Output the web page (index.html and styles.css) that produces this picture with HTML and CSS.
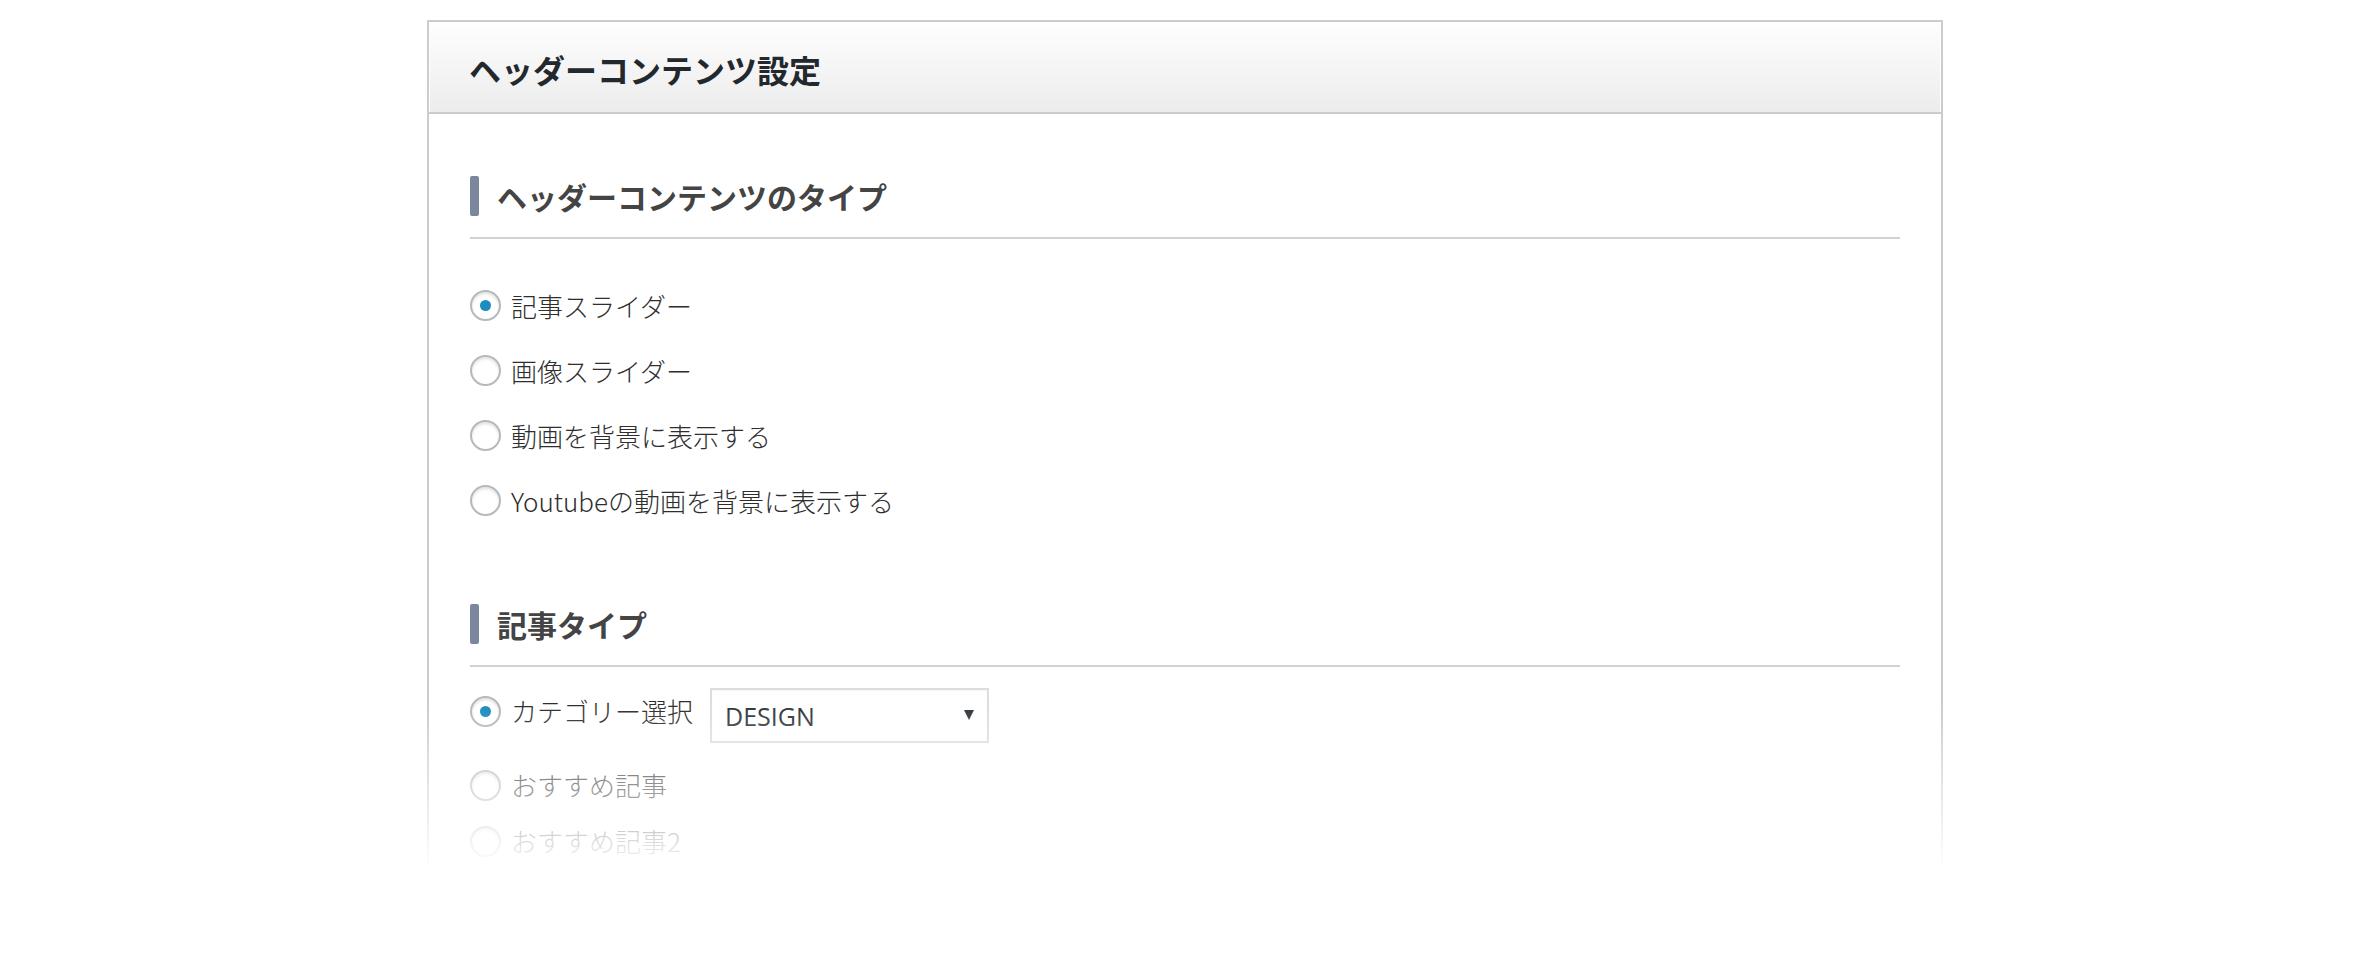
FILE: index.html
```html
<!DOCTYPE html>
<html lang="ja">
<head>
<meta charset="utf-8">
<title>ヘッダーコンテンツ設定</title>
<link rel="stylesheet" href="styles.css">
</head>
<body>
<div class="stage">
  <div class="panel">
    <div class="panel-head">
      <h1 class="panel-title">ヘッダーコンテンツ設定</h1>
    </div>
    <div class="panel-body">
      <h2 class="section-title section-first">ヘッダーコンテンツのタイプ</h2>
      <div class="list list-wide">
        <label class="opt"><span class="radio checked"></span><span class="opt-text">記事スライダー</span></label>
        <label class="opt"><span class="radio"></span><span class="opt-text">画像スライダー</span></label>
        <label class="opt"><span class="radio"></span><span class="opt-text">動画を背景に表示する</span></label>
        <label class="opt"><span class="radio"></span><span class="opt-text">Youtubeの動画を背景に表示する</span></label>
      </div>
      <h2 class="section-title section-next">記事タイプ</h2>
      <div class="list list-tight">
        <div class="opt-row">
          <label class="opt opt-select"><span class="radio checked"></span><span class="opt-text">カテゴリー選択</span></label>
          <div class="select"><span class="select-value">DESIGN</span><span class="select-arrow"></span></div>
        </div>
        <label class="opt opt-small opt-gap"><span class="radio"></span><span class="opt-text">おすすめ記事</span></label>
        <label class="opt opt-small"><span class="radio"></span><span class="opt-text">おすすめ記事2</span></label>
      </div>
    </div>
  </div>
  <div class="fade"></div>
</div>
</body>
</html>
```
FILE: styles.css
```css
html, body {
  margin: 0;
  padding: 0;
  background: #ffffff;
}

body {
  font-family: "Noto Sans CJK JP", "Noto Sans", sans-serif;
  color: #333;
}

.stage {
  position: relative;
  width: 1516px;
  height: 850px;
  margin: 20px auto 0;
  overflow: hidden;
}

.panel {
  box-sizing: border-box;
  width: 1516px;
  border: 2px solid #cccccc;
  background: #fff;
  min-height: 1000px;
}

.panel-head {
  box-sizing: border-box;
  height: 92px;
  border-bottom: 2px solid #cccccc;
  background: linear-gradient(#fefefe, #ececec);
  box-shadow: inset 1px 1px 0 #ffffff, inset -1px 0 0 #ffffff;
  display: flex;
  align-items: center;
  padding: 4px 0 0 40px;
}

.panel-title {
  margin: 0;
  font-size: 32px;
  font-weight: 700;
  color: #23282d;
  line-height: 1;
}

.panel-body {
  padding: 0 41px;
}

.section-title {
  display: flex;
  align-items: center;
  gap: 18px;
  height: 40px;
  margin: 0;
  padding-bottom: 21px;
  border-bottom: 2px solid #d2d2d2;
  font-size: 30px;
  font-weight: 700;
  color: #444;
  line-height: 1;
}

.section-title::before {
  content: "";
  display: block;
  width: 9px;
  height: 40px;
  border-radius: 2px;
  background: #7b879c;
}

.section-first {
  margin-top: 62px;
}

.section-next {
  margin-top: 71px;
}

.list-wide {
  margin-top: 34px;
}

.list-tight {
  margin-top: 21px;
}

.opt {
  display: flex;
  align-items: center;
  gap: 10px;
  height: 65px;
}

.opt-small {
  height: 56px;
}

.opt-gap {
  margin-top: 14px;
}

.opt-row {
  display: flex;
  align-items: flex-start;
  gap: 17px;
}

.opt-select {
  height: 46px;
}

.opt-text {
  font-size: 26px;
  font-weight: 300;
  color: #2e2e2e;
  line-height: 1;
  white-space: nowrap;
}

.radio {
  box-sizing: border-box;
  flex: none;
  width: 31px;
  height: 31px;
  border-radius: 50%;
  border: 2px solid #b4b9be;
  background: #fff;
  box-shadow: inset 0 2px 3px rgba(0, 0, 0, 0.12);
  display: flex;
  align-items: center;
  justify-content: center;
}

.radio.checked::after {
  content: "";
  width: 11px;
  height: 11px;
  border-radius: 50%;
  background: #1e8cbe;
}

.select {
  box-sizing: border-box;
  width: 279px;
  height: 55px;
  border: 2px solid #dddddd;
  background: #fff;
  box-shadow: inset 0 1px 2px rgba(0, 0, 0, 0.04);
  display: flex;
  align-items: center;
  justify-content: space-between;
  padding: 2px 13px 0 13px;
}

.select-value {
  font-family: "Open Sans", "Noto Sans", sans-serif;
  font-size: 25px;
  color: #32373c;
  line-height: 1;
}

.select-arrow {
  width: 0;
  height: 0;
  border-left: 5px solid transparent;
  border-right: 5px solid transparent;
  border-top: 10px solid #32373c;
  margin-top: -3px;
}

.fade {
  position: absolute;
  left: 0;
  right: 0;
  bottom: 0;
  height: 165px;
  background: linear-gradient(rgba(255, 255, 255, 0), #ffffff 100%);
}
```
